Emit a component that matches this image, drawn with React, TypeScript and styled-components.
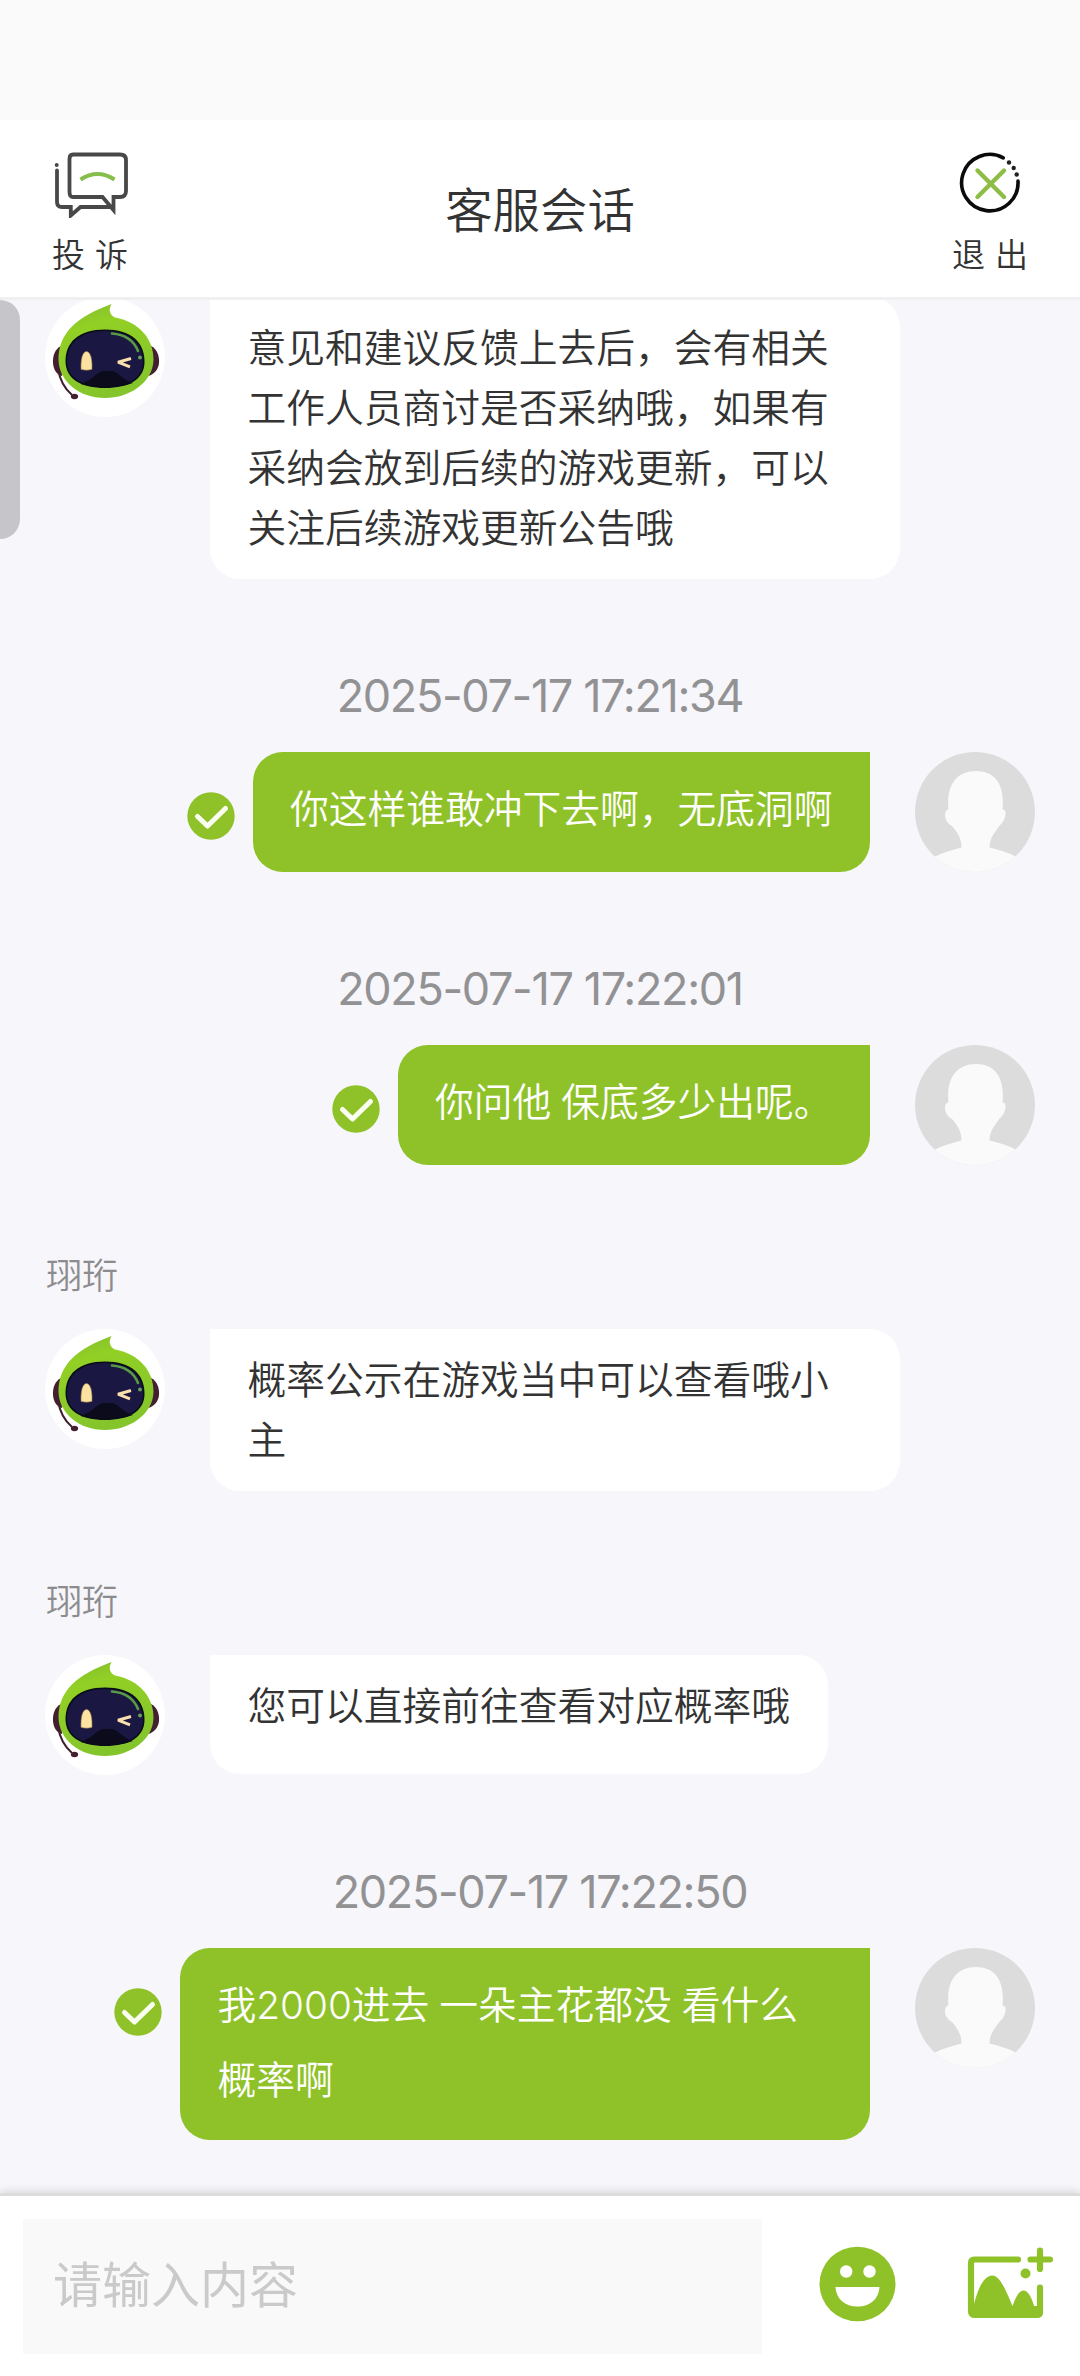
import React from "react";
import styled, { createGlobalStyle } from "styled-components";

const GREEN = "#8fc229";
const FONT = `Inter, "Noto Sans CJK SC", sans-serif`;

const GlobalStyle = createGlobalStyle`
  * { box-sizing: border-box; }
  html, body { margin: 0; padding: 0; }
  body {
    width: 1080px;
    height: 2376px;
    overflow: hidden;
    background: #fff;
    color: #333;
    font-family: ${FONT};
    font-weight: 350;
  }
  svg { display: block; }
`;

const Screen = styled.div`
  display: flex;
  flex-direction: column;
  width: 1080px;
  height: 2376px;
  overflow: hidden;
  background: #f6f6fb;
`;

const StatusStrip = styled.div`
  flex: none;
  height: 120px;
  background: #fafafa;
`;

const Header = styled.header`
  flex: none;
  display: flex;
  justify-content: space-between;
  height: 180px;
  padding: 0 45px;
  background: #fff;
  border-bottom: 3px solid #f0f0f0;
  position: relative;
  z-index: 1;
`;

const Title = styled.h1`
  margin: 0;
  font-size: 47.4px;
  font-weight: 350;
  line-height: 181px;
`;

const HeaderAction = styled.button`
  display: flex;
  flex-direction: column;
  align-items: center;
  width: 90px;
  padding: 28px 0 0;
  border: 0;
  background: none;
  color: inherit;
  font: inherit;
`;

const ActionLabel = styled.span`
  margin-top: 13px;
  font-size: 33px;
  line-height: 48px;
  white-space: nowrap;
  word-spacing: 0.5px;
`;

const Chat = styled.main`
  flex: 1;
  min-height: 0;
  position: relative;
  overflow: hidden;
  padding: 0 45px;
`;

const ScrollThumb = styled.div`
  position: absolute;
  left: 0;
  top: 0;
  width: 20px;
  height: 239px;
  border-radius: 0 20px 20px 0;
  background: #c6c6ca;
`;

const Entry = styled.section<{ $before: number }>`
  display: flex;
  flex-direction: column;
  margin-top: ${(p) => p.$before}px;
`;

const Time = styled.time`
  align-self: center;
  height: 90px;
  line-height: 67px;
  font-size: 45px;
  font-weight: 400;
  letter-spacing: -1.35px;
  color: #929294;
  white-space: nowrap;
`;

const AgentName = styled.span`
  height: 78px;
  padding-left: 1px;
  font-size: 36px;
  line-height: 51px;
  color: #8c8c8e;
`;

const Row = styled.div<{ $mine?: boolean }>`
  display: flex;
  align-items: flex-start;
  flex-direction: ${(p) => (p.$mine ? "row-reverse" : "row")};
  gap: 45px;
`;

const Avatar = styled.div`
  flex: none;
  width: 120px;
  height: 120px;
  border-radius: 50%;
  overflow: hidden;
  background: #fff;
`;

const Bubble = styled.div<{ $mine?: boolean }>`
  max-width: 690px;
  min-height: ${(p) => (p.$mine ? 120 : 119)}px;
  padding: ${(p) => (p.$mine ? "19px 37.5px 23px" : "21px 37.5px 21px")};
  border-radius: ${(p) => (p.$mine ? "30px 0 30px 30px" : "0 30px 30px 30px")};
  background: ${(p) => (p.$mine ? GREEN : "#fff")};
  color: ${(p) => (p.$mine ? "#fff" : "#333")};
  font-size: 38.75px;
  line-height: ${(p) => (p.$mine ? 75 : 60)}px;
  word-spacing: -1px;
`;

const Sent = styled.div`
  flex: none;
  width: 48px;
  margin: 40px -27px 0 0;
`;

const Footer = styled.footer`
  flex: none;
  display: flex;
  align-items: center;
  height: 180px;
  padding: 0 27px 0 23px;
  background: #fff;
  box-shadow: 0 -3px 0 #dcdcdc, 0 -5px 8px rgba(0, 0, 0, 0.12);
  position: relative;
  z-index: 1;
`;

const Field = styled.div`
  display: flex;
  align-items: center;
  width: 739px;
  height: 135px;
  padding: 0 30px 11px;
  margin-top: 1px;
  background: #f9f9f9;
  color: #cacaca;
  font-size: 49px;
  font-weight: 400;
`;

const Tools = styled.div`
  flex: 1;
  display: flex;
  justify-content: space-between;
  align-items: center;
  padding-left: 57px;
  margin-top: -5px;
`;

const RobotFace = () => (
  <svg width="120" height="120" viewBox="0 0 120 120">
    <defs>
      <linearGradient id="hood" x1="0" y1="0" x2="0.3" y2="1">
        <stop offset="0" stopColor="#7eb82c" />
        <stop offset="0.3" stopColor="#93d025" />
        <stop offset="1" stopColor="#84c52b" />
      </linearGradient>
    </defs>
    <path d="M16 49C10 52 7.5 59 8 66C8.5 73 12 78 17 79Z" fill="#43202f" />
    <path d="M106 49C112 52 114.500 59 114 66C113.500 73 108 78 103 79Z" fill="#43202f" />
    <path d="M13 72C15 84 20 92 27 98" fill="none" stroke="#43202f" strokeWidth="2" />
    <ellipse cx="29.500" cy="99.500" rx="3.600" ry="2.800" fill="#43202f" />
    <path
      d="M66.500 7C63 13 65 18 70 20.500C95 25 109 43 108.500 63C108 85 85 101 60 101C34 101 13.500 84 13.500 62C14 35 32 20 66.500 7Z"
      fill="url(#hood)"
    />
    <path
      d="M60 32.500C86 32.500 99.500 45 99.500 65C99.500 82 84 91 60 91C36 91 20.500 82 20.500 64C20.500 45 34 32.500 60 32.500Z"
      fill="#070d17"
    />
    <path
      d="M60 34C84 34 98 46 98 65C98 81 83 89.500 60 89.500C37 89.500 22 81 22 64C22 46 36 34 60 34Z"
      fill="#1a1742"
    />
    <path d="M36 87C47 83 52 75 58 74H68C74 76 79 84 88 86C72 91.500 50 91.500 36 87Z" fill="#0b0b1c" />
    <path d="M36 72.500C35.500 62 37.500 54.500 41.500 54.500C45.500 54.500 47.500 62 47 72.500Q41.500 74 36 72.500Z" fill="#fbe2a0" stroke="#8a6a45" strokeWidth="0.600" />
    <path d="M86 61.500L73 65.200L85 69.800" fill="none" stroke="#f8dfad" strokeWidth="3" strokeLinejoin="bevel" />
    <path d="M67 36.500C80 37.500 89 44 93 54" fill="none" stroke="#5b9a45" strokeWidth="2.600" strokeLinecap="round" />
    <circle cx="95" cy="60.500" r="2" fill="#5fa05a" />
  </svg>
);

const PersonSilhouette = () => (
  <svg width="120" height="120" viewBox="0 0 120 120">
    <rect width="120" height="120" fill="#dcdcdc" />
    <path
      d="M0 120V111L20 104.500C29 100 38 98 46.500 95.500C46.500 86 42 80 37 74C32 72 28 64 31 59Q32 57 33.500 57.500C31 34 41 19 61 19C81 19 90 34 87.500 57.500Q90 57 90.500 60C91 65 88 71 85 73C80 80 74.500 86 74.500 95.500C84 98 92 100 101 104.500L120 111V120Z"
      fill="#fafafa"
    />
    <path d="M0 104H20.500L0 120ZM120 104H100.500L120 120Z" fill="#f7f7fb" />
  </svg>
);

const SentMark = () => (
  <svg width="48" height="48" viewBox="0 0 48 48">
    <circle cx="24" cy="24" r="23.700" fill={GREEN} />
    <path d="M10.500 24.500L20.500 34L38.500 16.500" fill="none" stroke="#fafff0" strokeWidth="5" strokeLinecap="round" strokeLinejoin="round" />
  </svg>
);

const ComplaintIcon = () => (
  <svg width="78" height="70" viewBox="0 0 78 70" fill="none" stroke="#484848" strokeWidth="3.800">
    <path d="M22 6.500H69Q75 6.500 75 12V43Q75 49 69 49H62.500V62L51.500 49H22Q18.500 49 18.500 44V11Q18.500 6.500 22 6.500Z" />
    <path d="M6 22.500V54Q6 59 11 59H19.800V67.500L29.500 59H60" strokeLinecap="round" />
    <circle cx="5.700" cy="17" r="2" fill="#484848" stroke="none" />
    <path d="M29.500 31.500Q46.500 20.500 63.500 31.500" stroke="#86be4c" strokeWidth="4" />
  </svg>
);

const ExitIcon = () => (
  <svg width="70" height="70" viewBox="0 0 70 70" fill="none">
    <path d="M48.200 9.800A28.200 28.200 0 1 0 63 33" stroke="#0b0b0b" strokeWidth="3.600" strokeLinecap="round" />
    <g fill="#222">
      <circle cx="54" cy="14.500" r="2.200" />
      <circle cx="58.700" cy="20" r="2.200" />
      <circle cx="61.700" cy="26.500" r="2.200" />
    </g>
    <path d="M22.500 22.500L49 49M49 22.500L22.500 49" stroke="#8dbd45" strokeWidth="4.400" strokeLinecap="round" />
  </svg>
);

const SmileIcon = () => (
  <svg width="77" height="76" viewBox="0 0 77 76">
    <ellipse cx="38.500" cy="38" rx="38" ry="37.300" fill={GREEN} />
    <circle cx="27.200" cy="25.500" r="6.200" fill="#fff" />
    <circle cx="50.500" cy="25.500" r="6.200" fill="#fff" />
    <path d="M16.500 41H60.500C60 53 51 60.500 38.500 60.500C26 60.500 17 53 16.500 41Z" fill="#fff" />
  </svg>
);

const AddImageIcon = () => (
  <svg width="86" height="76" viewBox="0 0 86 76">
    <g fill="none" stroke={GREEN} strokeWidth="6.200" strokeLinecap="round">
      <path d="M51 13.500H7.500Q4 13.500 4 17V65Q4 69 8 69H70Q73 69 73 66V41.500" />
      <path d="M63.500 13.500H83M73 4.500V23" />
    </g>
    <circle cx="58.500" cy="27.500" r="5" fill={GREEN} />
    <path
      d="M6 70V62C10 45 16 29.500 25.500 29.500C34 29.500 41 50 45.500 60C49 51 52 44.500 56.500 44.500C61 44.500 65 52 67 60H73V70Z"
      fill={GREEN}
    />
  </svg>
);

interface Message {
  before: number;
  mine?: boolean;
  time?: string;
  name?: string;
  text: string;
}

const messages: Message[] = [
  {
    before: -3,
    text: "意见和建议反馈上去后，会有相关工作人员商讨是否采纳哦，如果有采纳会放到后续的游戏更新，可以关注后续游戏更新公告哦",
  },
  { before: 83, mine: true, time: "2025-07-17 17:21:34", text: "你这样谁敢冲下去啊，无底洞啊" },
  { before: 83, mine: true, time: "2025-07-17 17:22:01", text: "你问他 保底多少出呢。" },
  { before: 86, name: "珝珩", text: "概率公示在游戏当中可以查看哦小主" },
  { before: 86, name: "珝珩", text: "您可以直接前往查看对应概率哦" },
  { before: 83, mine: true, time: "2025-07-17 17:22:50", text: "我2000进去 一朵主花都没 看什么概率啊" },
];

const ChatEntry = ({ before, mine, time, name, text }: Message) => (
  <Entry $before={before}>
    {time && <Time>{time}</Time>}
    {name && <AgentName>{name}</AgentName>}
    <Row $mine={mine}>
      <Avatar>{mine ? <PersonSilhouette /> : <RobotFace />}</Avatar>
      <Bubble $mine={mine}>{text}</Bubble>
      {mine && (
        <Sent>
          <SentMark />
        </Sent>
      )}
    </Row>
  </Entry>
);

export default function App() {
  return (
    <Screen>
      <GlobalStyle />
      <StatusStrip />
      <Header>
        <HeaderAction>
          <ComplaintIcon />
          <ActionLabel>投 诉</ActionLabel>
        </HeaderAction>
        <Title>客服会话</Title>
        <HeaderAction>
          <ExitIcon />
          <ActionLabel>退 出</ActionLabel>
        </HeaderAction>
      </Header>
      <Chat>
        <ScrollThumb />
        {messages.map((m, i) => (
          <ChatEntry key={i} {...m} />
        ))}
      </Chat>
      <Footer>
        <Field>请输入内容</Field>
        <Tools>
          <SmileIcon />
          <AddImageIcon />
        </Tools>
      </Footer>
    </Screen>
  );
}
